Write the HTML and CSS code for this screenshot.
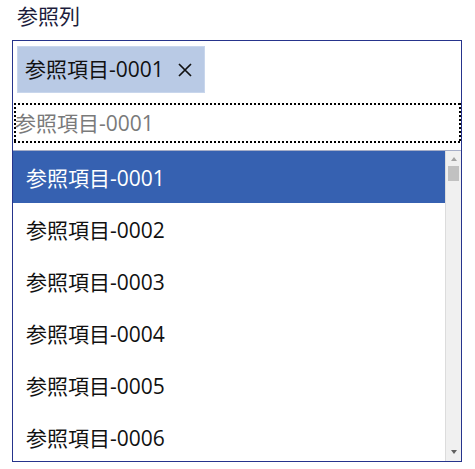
FILE: index.html
```html
<!DOCTYPE html>
<html lang="ja">
<head>
<meta charset="utf-8">
<link rel="stylesheet" href="styles.css">
</head>
<body>
<div class="label">参照列</div>
<div class="field">
  <div class="tags">
    <div class="tag">
      <span class="tag-text">参照項目-0001</span>
      <svg class="tag-x" width="14" height="14" viewBox="0 0 14 14"><path d="M1 1 L13 13 M13 1 L1 13" stroke="#111" stroke-width="1.7" fill="none"/></svg>
    </div>
  </div>
  <div class="input"><span class="placeholder">参照項目-0001</span></div>
  <div class="list">
    <div class="items">
      <div class="item selected">参照項目-0001</div>
      <div class="item">参照項目-0002</div>
      <div class="item">参照項目-0003</div>
      <div class="item">参照項目-0004</div>
      <div class="item">参照項目-0005</div>
      <div class="item">参照項目-0006</div>
    </div>
    <div class="scrollbar">
      <div class="arrow up"></div>
      <div class="thumb"></div>
      <div class="track"></div>
      <div class="arrow down"></div>
    </div>
  </div>
</div>
</body>
</html>
```
FILE: styles.css
```css
* { box-sizing: border-box; }
html, body { margin: 0; padding: 0; background: #fff; }
body {
  font-family: "Open Sans", "Noto Sans CJK JP", sans-serif;
  font-size: 21px;
  color: #1a1a1a;
  width: 475px;
  height: 469px;
  overflow: hidden;
}
.label {
  padding: 3px 0 0 17px;
  height: 40px;
  line-height: 27px;
  color: #1c1c3c;
}
.field {
  margin-left: 12px;
  width: 450px;
  height: 422px;
  border: 1px solid #26348c;
  display: flex;
  flex-direction: column;
}
.tags {
  padding: 5px 0 0 4px;
  display: flex;
}
.tag {
  height: 47px;
  width: 188px;
  background: #b9cae5;
  border: 1px solid #c8d6ec;
  padding: 0 0 0 7px;
  display: flex;
  align-items: center;
  gap: 14px;
  color: #111;
}
.tag-text { line-height: 1; }
.tag-x { flex: none; margin-top: 1px; }
.input {
  margin: 10px 0 0 1px;
  height: 40px;
  width: 447px;
  padding: 0 2px;
  display: flex;
  align-items: center;
  background:
    repeating-linear-gradient(90deg, #000 0 2px, transparent 2px 4px) top left / 100% 2px no-repeat,
    repeating-linear-gradient(90deg, #000 0 2px, transparent 2px 4px) bottom left / 100% 2px no-repeat,
    repeating-linear-gradient(180deg, #000 0 2px, transparent 2px 4px) top left / 2px 100% no-repeat,
    repeating-linear-gradient(180deg, #000 0 2px, transparent 2px 4px) top right / 2px 100% no-repeat;
}
.placeholder { color: #7a7a7a; line-height: 1; margin-left: -1px; }
.list {
  margin-top: 7px;
  border-top: 1px solid #a6aec8;
  flex: 1;
  display: flex;
  overflow: hidden;
}
.items {
  width: 432px;
  overflow: hidden;
}
.item {
  height: 52px;
  padding-left: 13px;
  display: flex;
  align-items: center;
  color: #111;
}
.item.selected {
  background: #3661b1;
  color: #fff;
}
.scrollbar {
  width: 16px;
  background: #f0f0f0;
  border-left: 1px solid #dcdcdc;
  display: flex;
  flex-direction: column;
  align-items: center;
}
.arrow {
  width: 0;
  height: 0;
  border-left: 3.5px solid transparent;
  border-right: 3.5px solid transparent;
}
.arrow.up {
  margin-top: 6px;
  border-bottom: 4px solid #a3a3a3;
}
.thumb {
  margin-top: 5px;
  width: 11px;
  height: 15px;
  background: #c1c1c1;
}
.track { flex: 1; }
.arrow.down {
  margin-bottom: 7px;
  border-top: 4px solid #606060;
}
```
